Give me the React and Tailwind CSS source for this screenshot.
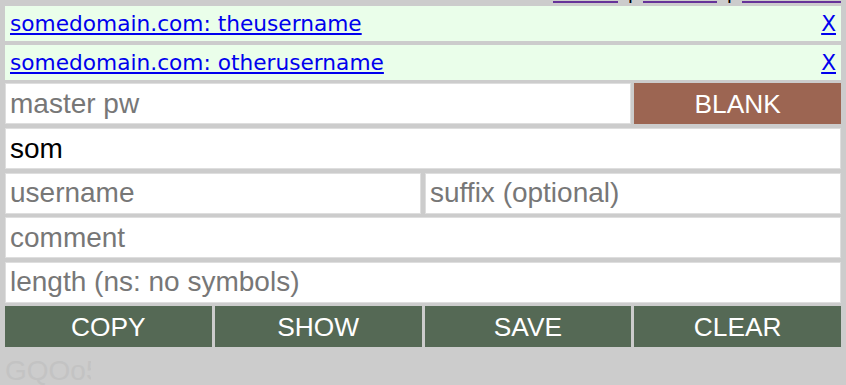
import React, { useState } from 'react';

const linkFont = { fontFamily: '"DejaVu Sans", Verdana, sans-serif' };

const SavedEntry = ({ label }) => (
  <div
    className="flex h-[35px] items-center justify-between bg-[#eafeea] px-[5px] text-[21.7px] leading-[35px]"
    style={linkFont}
  >
    <a href="#" className="text-[#0000ee] underline">
      {label}
    </a>
    <a href="#" className="text-[#0000ee] underline">
      X
    </a>
  </div>
);

const Field = ({ placeholder, value, onChange, className = '' }) => (
  <input
    type="text"
    placeholder={placeholder}
    value={value}
    onChange={onChange}
    className={`h-[41px] w-full min-w-0 border border-[#dedede] bg-white px-[4px] text-[28px] text-black outline-none placeholder:text-[#777777] ${className}`}
  />
);

const ActionButton = ({ children, className = '' }) => (
  <button
    type="button"
    className={`h-[41px] w-full pt-[2px] text-[26.3px] leading-none text-white ${className}`}
  >
    {children}
  </button>
);

const NavLink = ({ children, className = '' }) => (
  <a
    href="#"
    className={`block overflow-hidden whitespace-nowrap border-b-2 border-[#663399] pb-[6px] text-[21.7px] leading-[20px] text-[#663399] ${className}`}
  >
    {children}
  </a>
);

const Sep = () => (
  <span className="mx-[8.5px] block w-[8px] text-center text-[21.7px] leading-[22px] text-black">|</span>
);

export default function App() {
  const [site, setSite] = useState('som');
  const [master, setMaster] = useState('');
  const [username, setUsername] = useState('');
  const [suffix, setSuffix] = useState('');
  const [comment, setComment] = useState('');
  const [length, setLength] = useState('');

  return (
    <div
      className="h-[385px] w-[846px] overflow-hidden bg-[#cccccc] px-[5px]"
      style={{ fontFamily: '"Liberation Sans", Arial, sans-serif' }}
    >
      {/* nav links, scrolled mostly out of view */}
      <div className="flex h-[3px] items-end justify-end overflow-hidden">
        <div className="mr-[-1px] flex items-end" style={linkFont}>
          <NavLink className="w-[65px]">about</NavLink>
          <Sep />
          <NavLink className="w-[74px]">export</NavLink>
          <Sep />
          <NavLink className="w-[100px]">download</NavLink>
        </div>
      </div>

      <div className="mt-[3px] flex flex-col gap-[4px]">
        <SavedEntry label="somedomain.com: theusername" />
        <SavedEntry label="somedomain.com: otherusername" />
      </div>

      <div className="mt-[3px] grid grid-cols-4 gap-[3px]">
        <Field
          className="col-span-3"
          placeholder="master pw"
          value={master}
          onChange={(e) => setMaster(e.target.value)}
        />
        <ActionButton className="bg-[#9c6552]">BLANK</ActionButton>
      </div>

      <div className="mt-[4px] flex flex-col gap-[3.5px]">
        <Field value={site} onChange={(e) => setSite(e.target.value)} />
        <div className="grid grid-cols-2 gap-[4px]">
          <Field placeholder="username" value={username} onChange={(e) => setUsername(e.target.value)} />
          <Field placeholder="suffix (optional)" value={suffix} onChange={(e) => setSuffix(e.target.value)} />
        </div>
        <Field placeholder="comment" value={comment} onChange={(e) => setComment(e.target.value)} />
        <Field
          className="bg-[#f7f7f7]"
          placeholder="length (ns: no symbols)"
          value={length}
          onChange={(e) => setLength(e.target.value)}
        />
      </div>

      <div className="mt-[3px] grid grid-cols-4 gap-[3px]">
        <ActionButton className="bg-[#556955]">COPY</ActionButton>
        <ActionButton className="bg-[#556955]">SHOW</ActionButton>
        <ActionButton className="bg-[#556955]">SAVE</ActionButton>
        <ActionButton className="bg-[#556955]">CLEAR</ActionButton>
      </div>

      <div className="mt-[3px] w-[86px] overflow-hidden whitespace-nowrap text-[28px] text-[#c3c3c3]">
        GQOo5xKp
      </div>
    </div>
  );
}
